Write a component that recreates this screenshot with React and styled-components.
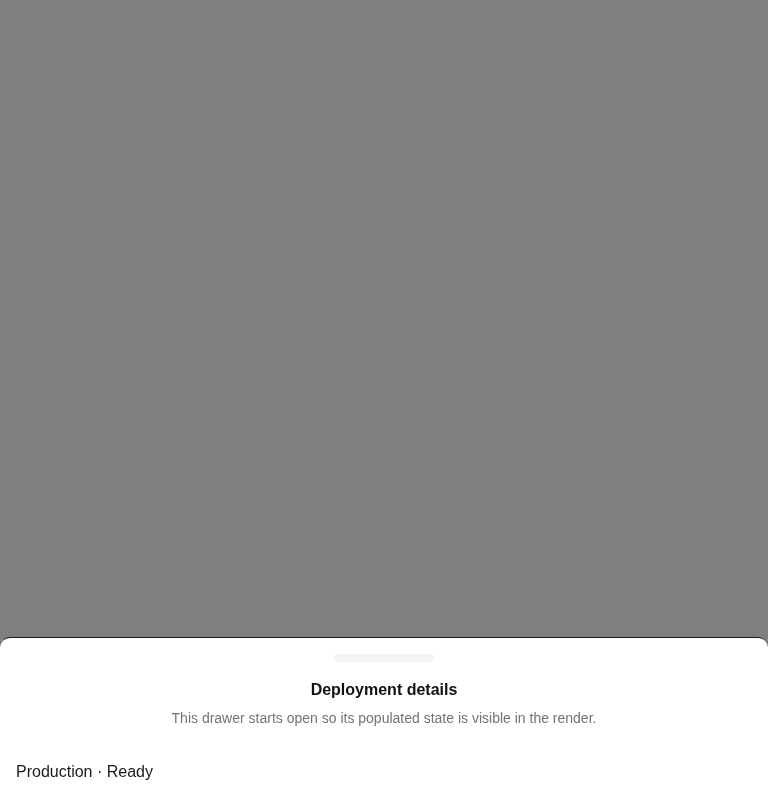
import { createGlobalStyle, styled } from 'styled-components'

const GlobalStyle = createGlobalStyle`
  html, body {
    margin: 0;
    padding: 0;
    height: 100%;
    background: #fff;
    font-family: 'Liberation Sans', Arial, sans-serif;
  }
`

const App = () => {
  return (
    <>
      <GlobalStyle />
      <Overlay />
      <Drawer>
        <Handle />
        <Header>
          <Title>Deployment details</Title>
          <Description>
            This drawer starts open so its populated state is visible in the render.
          </Description>
        </Header>
        <Body>Production · Ready</Body>
      </Drawer>
    </>
  )
}

const Overlay = styled.div`
  position: fixed;
  inset: 0;
  background: rgba(0, 0, 0, 0.5);
`

const Drawer = styled.div`
  position: fixed;
  left: 0;
  right: 0;
  top: 637px;
  bottom: 0;
  display: flex;
  flex-direction: column;
  background: #fff;
  border-top: 1px solid #1a1a1a;
  border-radius: 10px 10px 0 0;
  overflow: hidden;
`

const Handle = styled.div`
  width: 100px;
  height: 8px;
  margin: 16px auto 0;
  border-radius: 999px;
  background: #f4f4f5;
  flex-shrink: 0;
`

const Header = styled.div`
  display: grid;
  gap: 7px;
  padding: 17px 16px 16px;
  text-align: center;
`

const Title = styled.h2`
  margin: 0;
  font-size: 16px;
  line-height: 22px;
  font-weight: 700;
  color: #111;
`

const Description = styled.p`
  margin: 0;
  font-size: 14px;
  line-height: 20px;
  color: #737373;
`

const Body = styled.div`
  padding: 17px 16px 16px;
  font-size: 16px;
  line-height: 22px;
  color: #1a1a1a;
`

export default App
